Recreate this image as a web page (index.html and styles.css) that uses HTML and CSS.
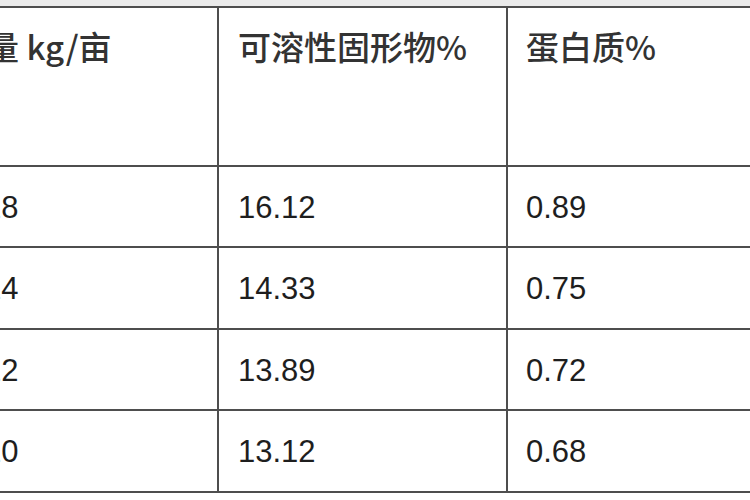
FILE: index.html
```html
<!DOCTYPE html>
<html lang="zh">
<head>
<meta charset="utf-8">
<title>品质表</title>
<link rel="stylesheet" href="styles.css">
</head>
<body>
<div class="sheet">
  <table class="grid">
    <thead>
      <tr class="head-row">
        <th class="c1">施肥量 kg/亩</th>
        <th class="c2">可溶性固形物%</th>
        <th class="c3">蛋白质%</th>
      </tr>
    </thead>
    <tbody>
      <tr class="r-a">
        <td class="c1 num">18</td>
        <td class="c2">16.12</td>
        <td class="c3">0.89</td>
      </tr>
      <tr class="r-b">
        <td class="c1 num">14</td>
        <td class="c2">14.33</td>
        <td class="c3">0.75</td>
      </tr>
      <tr class="r-a">
        <td class="c1 num">12</td>
        <td class="c2">13.89</td>
        <td class="c3">0.72</td>
      </tr>
      <tr class="r-b">
        <td class="c1 num">10</td>
        <td class="c2">13.12</td>
        <td class="c3">0.68</td>
      </tr>
    </tbody>
  </table>
</div>
</body>
</html>
```

FILE: styles.css
```css
html, body {
  margin: 0;
  padding: 0;
  background: #ffffff;
  overflow: hidden;
  width: 750px;
  height: 500px;
}

.sheet {
  border-top: 6px solid #ebebeb;
  width: 750px;
  overflow: hidden;
}

.grid {
  border-collapse: separate;
  border-spacing: 0;
  table-layout: fixed;
  margin-left: -100px;
  width: 906px;
  border-bottom: 2px solid #4e4e4e;
}

.grid th,
.grid td {
  box-sizing: border-box;
  border-top: 2px solid #4e4e4e;
  border-left: 2px solid #4e4e4e;
  text-align: left;
  vertical-align: top;
  padding: 0;
  white-space: nowrap;
}

.grid th {
  height: 159px;
  padding-top: 18px;
  font-family: "Noto Sans CJK SC", "Liberation Sans", sans-serif;
  font-size: 33px;
  line-height: 40px;
  font-weight: 500;
  color: #333333;
}

.pct {
  letter-spacing: 0;
}

.grid td {
  padding-top: 23px;
  font-family: "Liberation Sans", Arial, sans-serif;
  font-size: 31px;
  line-height: 36px;
  color: #1e1e1e;
}

.r-a td { height: 81px; }
.r-b td { height: 82px; }

.c1 { width: 317px; }
.c2 { width: 289px; }
.c3 { width: 300px; }

.grid .c1 { padding-left: 18px; }
.grid .c1.num { padding-left: 82px; }
.grid .c2 { padding-left: 19px; }
.grid .c3 { padding-left: 18px; }
```
